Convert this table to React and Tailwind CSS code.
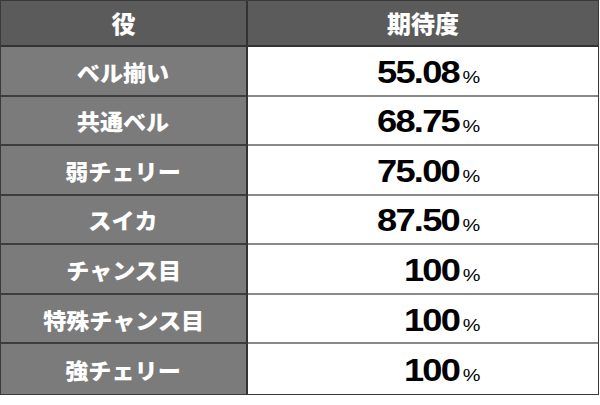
import React from "react";

const rows = [
  { name: "ベル揃い", value: "55.08" },
  { name: "共通ベル", value: "68.75" },
  { name: "弱チェリー", value: "75.00" },
  { name: "スイカ", value: "87.50" },
  { name: "チャンス目", value: "100" },
  { name: "特殊チャンス目", value: "100" },
  { name: "強チェリー", value: "100" },
];

const jp = { fontFamily: '"Noto Sans CJK JP", "Noto Sans", sans-serif' };
const num = { fontFamily: '"Liberation Sans", Arial, sans-serif' };

const App = () => {
  return (
    <div className="w-[600px] h-[405px] bg-white">
      <div className="w-[599px] h-[395px] flex flex-col border border-[#3a3a3a]">
        {/* header */}
        <div className="flex h-[46px] bg-[#5b5b5b] border-b-2 border-[#333]">
          <div
            className="w-[247px] flex items-center justify-center border-r-2 border-[#333] text-white text-[24px] font-black"
            style={jp}
          >
            役
          </div>
          <div
            className="flex-1 flex items-center justify-center text-white text-[24px] font-black"
            style={jp}
          >
            期待度
          </div>
        </div>
        {/* body */}
        <div className="flex-1 grid grid-rows-7">
          {rows.map((row, i) => (
            <div key={row.name} className="flex">
              <div
                className={`w-[247px] flex items-center justify-center bg-[#7b7b7b] border-r-2 border-[#333] ${
                  i < rows.length - 1 ? "border-b-2 border-b-[#3d3d3d]" : ""
                }`}
              >
                <span
                  className="text-white text-[22px] font-black leading-none inline-block scale-x-[1.05]"
                  style={jp}
                >
                  {row.name}
                </span>
              </div>
              <div
                className={`flex-1 flex items-center justify-end pr-[118px] bg-white ${
                  i < rows.length - 1 ? "border-b-2 border-b-[#8a8a8a]" : ""
                }`}
              >
                <span
                  className="inline-block origin-right scale-x-[1.17] text-black leading-none whitespace-nowrap pt-[3px]"
                  style={num}
                >
                  <span className="text-[31px] font-bold tracking-[-1.5px]">{row.value}</span>
                  <span className="text-[17px] ml-[3px]">%</span>
                </span>
              </div>
            </div>
          ))}
        </div>
      </div>
    </div>
  );
};

export default App;
